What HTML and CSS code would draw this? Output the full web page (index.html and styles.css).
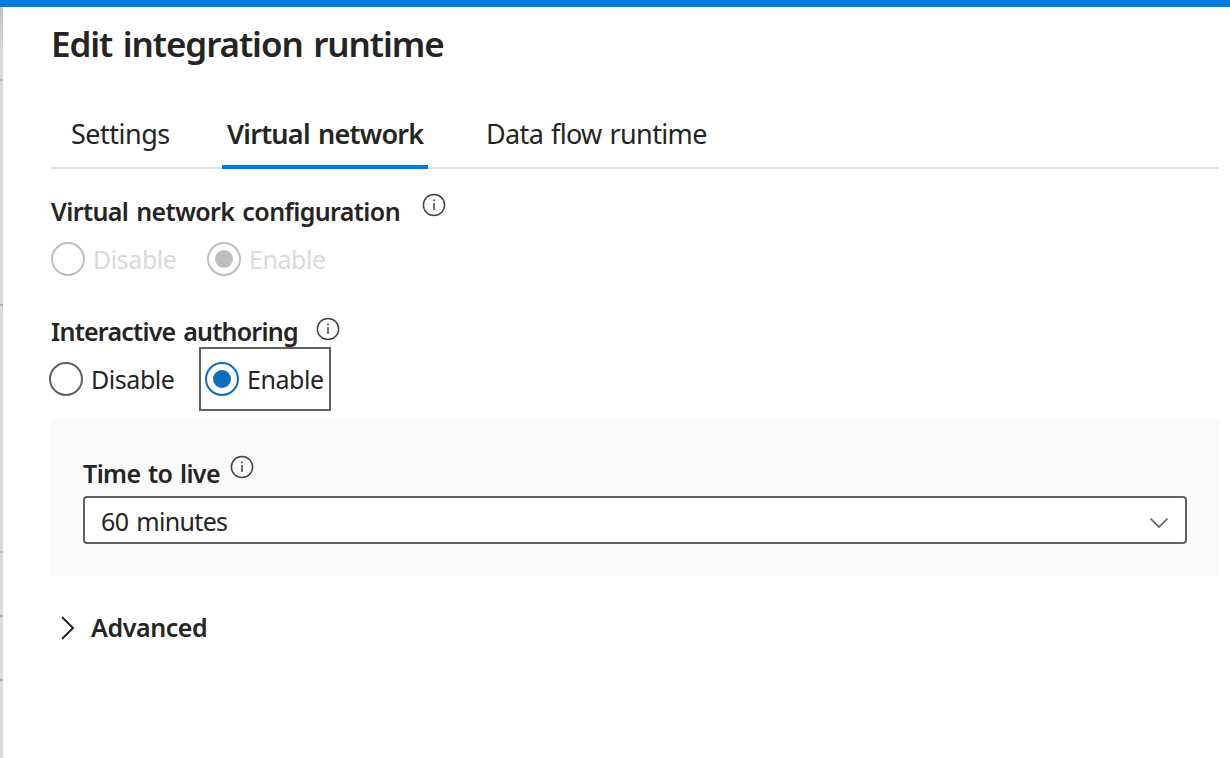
FILE: index.html
```html
<!DOCTYPE html>
<html lang="en">
<head>
<meta charset="utf-8">
<title>Edit integration runtime</title>
<link rel="stylesheet" href="styles.css">
</head>
<body>
<div class="topbar"></div>
<div class="shell">
  <div class="backdrop"></div>
  <main class="panel">
    <h1 class="title"><span>Edit integration runtime</span></h1>
    <nav class="tabs">
      <a class="tab tab-settings"><span>Settings</span></a>
      <a class="tab tab-network active"><span>Virtual network</span></a>
      <a class="tab tab-flow"><span>Data flow runtime</span></a>
    </nav>

    <div class="label label-config"><span>Virtual network configuration</span>
      <svg class="info" viewBox="0 0 24 24"><circle cx="12" cy="12" r="10.6"/><path d="M12 10V17"/><path class="dot" d="M11.200 6.500h1.600v1.700h-1.600z"/></svg>
    </div>
    <div class="radios disabled">
      <div class="radio"><i class="ring"></i><span>Disable</span></div>
      <div class="radio checked"><i class="ring"></i><span>Enable</span></div>
    </div>

    <div class="label label-authoring"><span>Interactive authoring</span>
      <svg class="info" viewBox="0 0 24 24"><circle cx="12" cy="12" r="10.6"/><path d="M12 10V17"/><path class="dot" d="M11.200 6.500h1.600v1.700h-1.600z"/></svg>
    </div>
    <div class="radios live">
      <div class="radio"><i class="ring"></i><span>Disable</span></div>
      <div class="radio checked focused"><i class="ring"></i><span>Enable</span></div>
    </div>

    <section class="card">
      <div class="label label-ttl"><span>Time to live</span>
        <svg class="info" viewBox="0 0 24 24"><circle cx="12" cy="12" r="10.6"/><path d="M12 10V17"/><path class="dot" d="M11.200 6.500h1.600v1.700h-1.600z"/></svg>
      </div>
      <div class="select"><span>60 minutes</span>
        <svg class="chevron-down" viewBox="0 0 20 12"><path d="M1.5 1.5 10 10l8.500-8.500"/></svg>
      </div>
    </section>

    <div class="advanced">
      <svg class="chevron-right" viewBox="0 0 16 24"><path d="M2 1 13 12 2 23"/></svg>
      <span>Advanced</span>
    </div>
  </main>
</div>
</body>
</html>
```
FILE: styles.css
```css
* { box-sizing: border-box; }
body {
  margin: 0;
  height: 758px;
  overflow: hidden;
  background: #fff;
  color: #242424;
  font-family: "Noto Sans", "Open Sans", sans-serif;
  font-size: 25px;
  white-space: nowrap;
}
.topbar { height: 7px; background: #0078d7; }
.shell { display: flex; height: 751px; }
.backdrop {
  width: 3px;
  background:
    linear-gradient(#b9b9b9, #b9b9b9) 0 72px / 3px 2px no-repeat,
    linear-gradient(#b0b0b0, #b0b0b0) 0 297px / 3px 2px no-repeat,
    linear-gradient(#bdbdbd, #bdbdbd) 0 544px / 3px 2px no-repeat,
    linear-gradient(#adadad, #adadad) 0 608px / 3px 2px no-repeat,
    linear-gradient(#adadad, #adadad) 0 672px / 3px 2px no-repeat,
    linear-gradient(#c3c3c3, #d9d9d9 50px);
}
.panel { flex: 1; padding: 15px 11px 0 48px; }
.title { margin: 0; font-size: 35px; font-weight: 560; line-height: 43px; letter-spacing: -1.08px; word-spacing: 2.5px; }
.tabs {
  display: flex;
  height: 65px;
  margin-top: 39px;
  border-bottom: 2px solid #e0e0e0;
  font-size: 27px;
  line-height: 60px;
}
.tab { height: 65px; padding-left: 20px; }
.tab-settings { width: 171px; letter-spacing: -0.5px; }
.tab-network { width: 206px; padding-left: 5px; letter-spacing: -0.75px; word-spacing: 2px; }
.tab-flow { padding-left: 58px; letter-spacing: -0.65px; word-spacing: 1.500px; }
.tab.active { font-weight: 600; border-bottom: 4px solid #0078d7; }
.label { display: flex; height: 34px; font-weight: 600; line-height: 34px; letter-spacing: -0.6px; word-spacing: 2px; }
.label-config { margin-top: 25px; }
.label-config span { width: 371px; }
.label-authoring { margin-top: 24px; letter-spacing: -0.78px; }
.label-authoring span { width: 265px; }
.info { width: 24px; height: 24px; margin-top: -1px; fill: none; stroke: #424242; stroke-width: 1.5; }
.label-authoring .info { margin-top: 3px; }
.info .dot { fill: #424242; stroke: none; }
.radios { display: flex; height: 64px; }
.disabled { height: 48px; margin-top: 14px; }
.radio { display: flex; align-items: center; width: 156px; height: 34px; letter-spacing: -0.45px; }
.ring {
  display: flex;
  align-items: center;
  justify-content: center;
  flex: none;
  width: 34px;
  height: 34px;
  margin-right: 8px;
  border: 2px solid #616161;
  border-radius: 50%;
}
.checked .ring::after { content: ""; width: 18px; height: 18px; border-radius: 50%; background: #0f6cbd; }
.checked .ring { border-color: #0f6cbd; }
.disabled .radio { color: #dadada; }
.disabled .ring { border-color: #bdbdbd; }
.disabled .checked .ring::after { background: #bdbdbd; }
.live { margin: -1px 0 0 -2px; }
.live .radio { margin-top: 15px; width: 150px; }
.live .focused { width: 132px; height: 64px; margin-top: 0; padding-left: 4px; border: 2px solid #616161; }
.card { height: 157px; margin-top: 8px; padding: 37px 32px 0; background: #fafafa; }
.label-ttl { height: 40px; letter-spacing: -0.6px; word-spacing: 1.6px; }
.label-ttl span { width: 147px; }
.select {
  display: flex;
  align-items: center;
  justify-content: space-between;
  height: 48px;
  padding: 1px 16px 0;
  border: 2px solid #616161;
  border-radius: 4px;
  background: #fff;
  letter-spacing: -0.65px;
  word-spacing: 2px;
}
.chevron-down { width: 20px; height: 12px; margin-top: 5px; fill: none; stroke: #616161; stroke-width: 1.7; }
.advanced { display: flex; align-items: center; height: 34px; margin-top: 35px; padding-left: 9px; font-weight: 600; letter-spacing: -0.4px; }
.advanced span { margin-top: -3px; }
.chevron-right { width: 16px; height: 24px; margin-right: 15px; fill: none; stroke: #242424; stroke-width: 2; }
```
